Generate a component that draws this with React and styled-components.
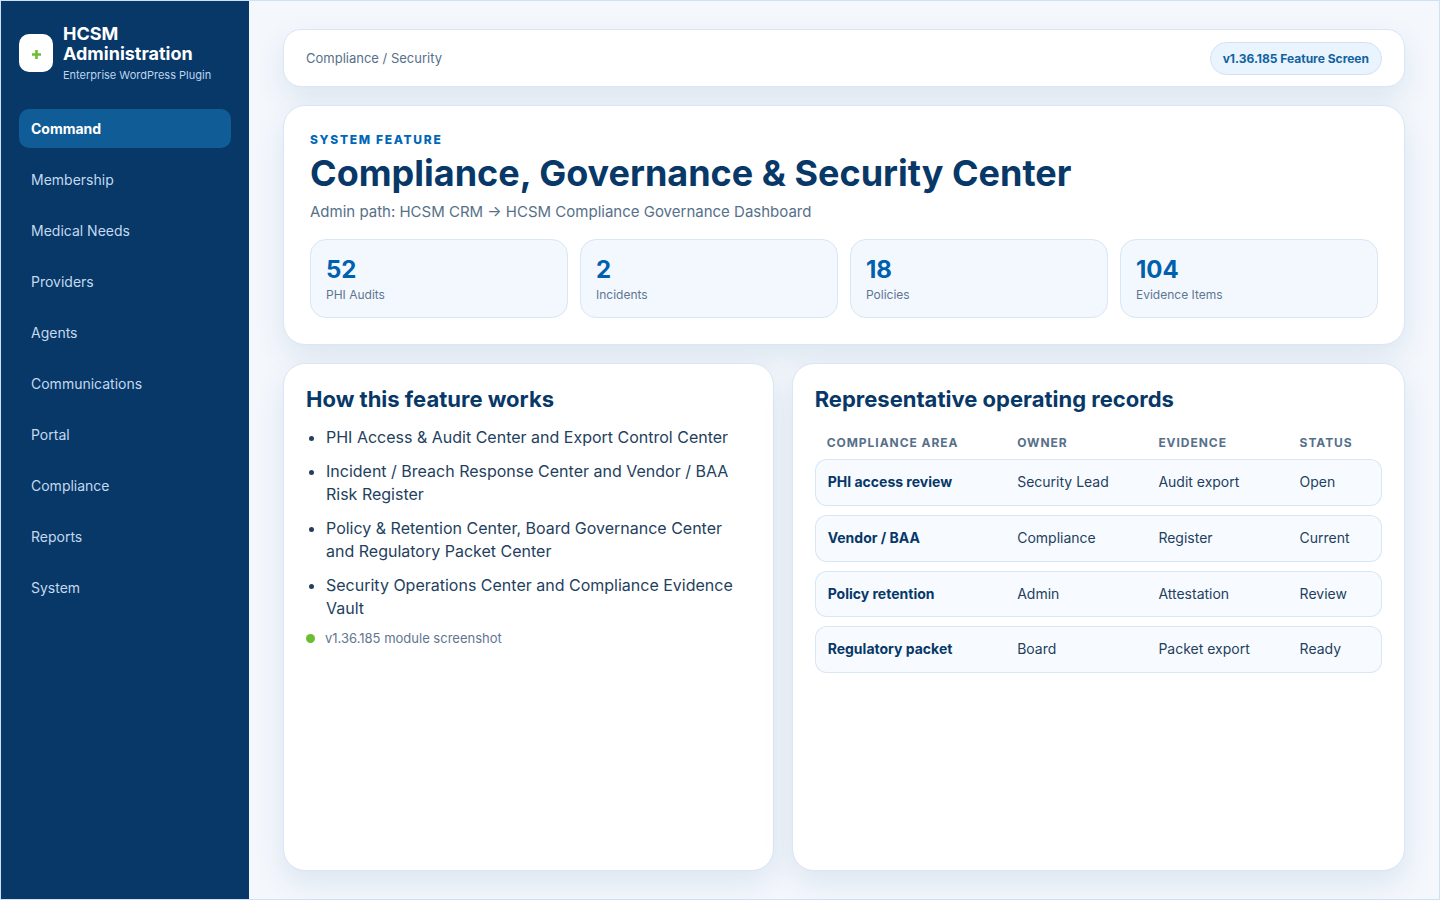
import styled, { createGlobalStyle } from "styled-components";

const GlobalStyle = createGlobalStyle`
    * { box-sizing: border-box; }
    html, body { margin: 0; padding: 0; }
    body {
        font-family: Inter, "Liberation Sans", sans-serif;
        color: #243f5e;
        background: #f4f8fd;
    }
`;

const Frame = styled.div`
    display: flex;
    width: 1440px;
    height: 900px;
    border: 1px solid #cfe2f5;
    overflow: hidden;
`;

const Sidebar = styled.aside`
    width: 248px;
    flex-shrink: 0;
    padding: 23px 18px;
    background: #073868;
    color: #fff;
`;

const Brand = styled.div`
    display: flex;
    align-items: center;
    gap: 10px;
    margin-bottom: 27px;
`;

const Logo = styled.div`
    width: 34px;
    height: 38px;
    flex-shrink: 0;
    display: flex;
    justify-content: center;
    align-items: center;
    padding-top: 3px;
    background: #fff;
    border-radius: 10px;
    color: #6cbd2f;
`;

const BrandTitle = styled.div`
    font-size: 18px;
    line-height: 20px;
    font-weight: 700;
`;

const BrandSub = styled.div`
    margin-top: 4px;
    font-size: 11px;
    line-height: 14px;
    color: #bcd5ee;
`;

const Nav = styled.nav`
    display: flex;
    flex-direction: column;
    gap: 12px;
`;

const NavItem = styled.a`
    display: block;
    height: 39px;
    padding: 0 12px;
    border-radius: 10px;
    font-size: 14px;
    line-height: 39px;
    font-weight: ${(p) => (p.$active ? 700 : 400)};
    color: ${(p) => (p.$active ? "#fff" : "#c4d9ef")};
    background: ${(p) => (p.$active ? "#0f5c96" : "transparent")};
`;

const Main = styled.main`
    flex: 1;
    min-width: 0;
    display: flex;
    flex-direction: column;
    gap: 18px;
    padding: 28px 34px;
    background: #f4f8fd;
`;

const Card = styled.section`
    background: #fff;
    border: 1px solid #d8e6f5;
    border-radius: 22px;
    box-shadow: 0 12px 30px rgba(7, 56, 104, 0.1);
`;

const Topbar = styled(Card)`
    height: 58px;
    flex-shrink: 0;
    display: flex;
    justify-content: space-between;
    align-items: center;
    padding: 0 22px;
    border-radius: 18px;
    font-size: 13px;
    color: #567089;
`;

const Badge = styled.span`
    height: 33px;
    padding: 0 12px;
    border: 1px solid #cfe2f5;
    border-radius: 17px;
    background: #e9f4fe;
    font-size: 12px;
    line-height: 31px;
    font-weight: 700;
    color: #12629f;
`;

const Hero = styled(Card)`
    flex-shrink: 0;
    height: 240px;
    padding: 26px;
`;

const Eyebrow = styled.div`
    font-size: 12px;
    line-height: 15px;
    font-weight: 800;
    letter-spacing: 0.14em;
    color: #0066b8;
`;

const Title = styled.h1`
    margin: 4px 0 0;
    font-size: 36px;
    line-height: 44px;
    font-weight: 700;
    color: #073868;
`;

const Path = styled.p`
    margin: 6px 0 0;
    font-size: 15px;
    line-height: 22px;
    color: #567089;
`;

const Stats = styled.div`
    display: grid;
    grid-template-columns: repeat(4, 1fr);
    gap: 12px;
    margin-top: 16px;
`;

const Stat = styled.div`
    height: 79px;
    padding: 15px 15px;
    border: 1px solid #d8e6f5;
    border-radius: 16px;
    background: #f3f8fe;
`;

const StatValue = styled.div`
    font-size: 24px;
    line-height: 30px;
    font-weight: 700;
    color: #0060ae;
`;

const StatLabel = styled.div`
    margin-top: 2px;
    font-size: 12px;
    line-height: 16px;
    color: #5f7690;
`;

const Columns = styled.div`
    flex: 1;
    min-height: 0;
    display: grid;
    grid-template-columns: minmax(0, 0.8fr) minmax(0, 1fr);
    gap: 18px;
`;

const Panel = styled(Card)`
    padding: 22px;
`;

const PanelTitle = styled.h2`
    margin: 0;
    font-size: 22px;
    line-height: 26px;
    font-weight: 700;
    color: #073868;
`;

const List = styled.ul`
    margin: 14px 0 0;
    padding: 0 0 0 20px;
`;

const ListItem = styled.li`
    margin-bottom: 11px;
    font-size: 16px;
    line-height: 23px;
`;

const Note = styled.div`
    display: flex;
    align-items: center;
    gap: 10px;
    font-size: 13px;
    line-height: 14px;
    color: #5f7690;
`;

const Dot = styled.span`
    width: 9px;
    height: 9px;
    border-radius: 50%;
    background: #6cbd2f;
`;

const Table = styled.table`
    width: 100%;
    margin-top: 8.2px;
    table-layout: fixed;
    border-collapse: separate;
    border-spacing: 0 9px;
`;

const Th = styled.th`
    width: ${(p) => p.$width};
    padding: 6px 12px 0;
    text-align: left;
    font-size: 12px;
    line-height: 15px;
    font-weight: 700;
    letter-spacing: 0.08em;
    color: #567089;
`;

const Td = styled.td`
    height: 46.67px;
    padding: 0 12px 0.4px;
    border-top: 1px solid #d8e6f5;
    border-bottom: 1px solid #d8e6f5;
    background: #f7fbff;
    font-size: 14px;
    line-height: 20px;
    &:first-child {
        border-left: 1px solid #d8e6f5;
        border-radius: 12px 0 0 12px;
        font-weight: 700;
        color: #073868;
    }
    &:last-child {
        border-right: 1px solid #d8e6f5;
        border-radius: 0 12px 12px 0;
    }
`;

const navItems = ["Command", "Membership", "Medical Needs", "Providers", "Agents", "Communications", "Portal", "Compliance", "Reports", "System"];

const stats = [
    ["52", "PHI Audits"],
    ["2", "Incidents"],
    ["18", "Policies"],
    ["104", "Evidence Items"],
];

const steps = [
    "PHI Access & Audit Center and Export Control Center",
    "Incident / Breach Response Center and Vendor / BAA Risk Register",
    "Policy & Retention Center, Board Governance Center and Regulatory Packet Center",
    "Security Operations Center and Compliance Evidence Vault",
];

const columns = [
    ["Compliance Area", "190.5px"],
    ["Owner", "141.2px"],
    ["Evidence", "141.2px"],
    ["Status", "94.4px"],
];

const records = [
    ["PHI access review", "Security Lead", "Audit export", "Open"],
    ["Vendor / BAA", "Compliance", "Register", "Current"],
    ["Policy retention", "Admin", "Attestation", "Review"],
    ["Regulatory packet", "Board", "Packet export", "Ready"],
];

export default function App() {
    return <>
        <GlobalStyle />
        <Frame>
            <Sidebar>
                <Brand>
                    <Logo>
                        <svg width="9" height="9" viewBox="0 0 9 9" fill="none" stroke="currentColor" strokeWidth="2.6"><path d="M4.5 0v9M0 4.5h9" /></svg>
                    </Logo>
                    <div>
                        <BrandTitle>HCSM Administration</BrandTitle>
                        <BrandSub>Enterprise WordPress Plugin</BrandSub>
                    </div>
                </Brand>
                <Nav>
                    {navItems.map((item, i) => <NavItem key={item} $active={i === 0}>{item}</NavItem>)}
                </Nav>
            </Sidebar>
            <Main>
                <Topbar as="header">
                    <span>Compliance / Security</span>
                    <Badge>v1.36.185 Feature Screen</Badge>
                </Topbar>
                <Hero>
                    <Eyebrow>SYSTEM FEATURE</Eyebrow>
                    <Title>Compliance, Governance &amp; Security Center</Title>
                    <Path>Admin path: HCSM CRM → HCSM Compliance Governance Dashboard</Path>
                    <Stats>
                        {stats.map(([value, label]) => <Stat key={label}>
                            <StatValue>{value}</StatValue>
                            <StatLabel>{label}</StatLabel>
                        </Stat>)}
                    </Stats>
                </Hero>
                <Columns>
                    <Panel>
                        <PanelTitle>How this feature works</PanelTitle>
                        <List>
                            {steps.map((step) => <ListItem key={step}>{step}</ListItem>)}
                        </List>
                        <Note><Dot />v1.36.185 module screenshot</Note>
                    </Panel>
                    <Panel>
                        <PanelTitle>Representative operating records</PanelTitle>
                        <Table>
                            <thead>
                                <tr>
                                    {columns.map(([name, width]) => <Th key={name} $width={width}>{name.toUpperCase()}</Th>)}
                                </tr>
                            </thead>
                            <tbody>
                                {records.map((row) => <tr key={row[0]}>
                                    {row.map((cell) => <Td key={cell}>{cell}</Td>)}
                                </tr>)}
                            </tbody>
                        </Table>
                    </Panel>
                </Columns>
            </Main>
        </Frame>
    </>;
}
